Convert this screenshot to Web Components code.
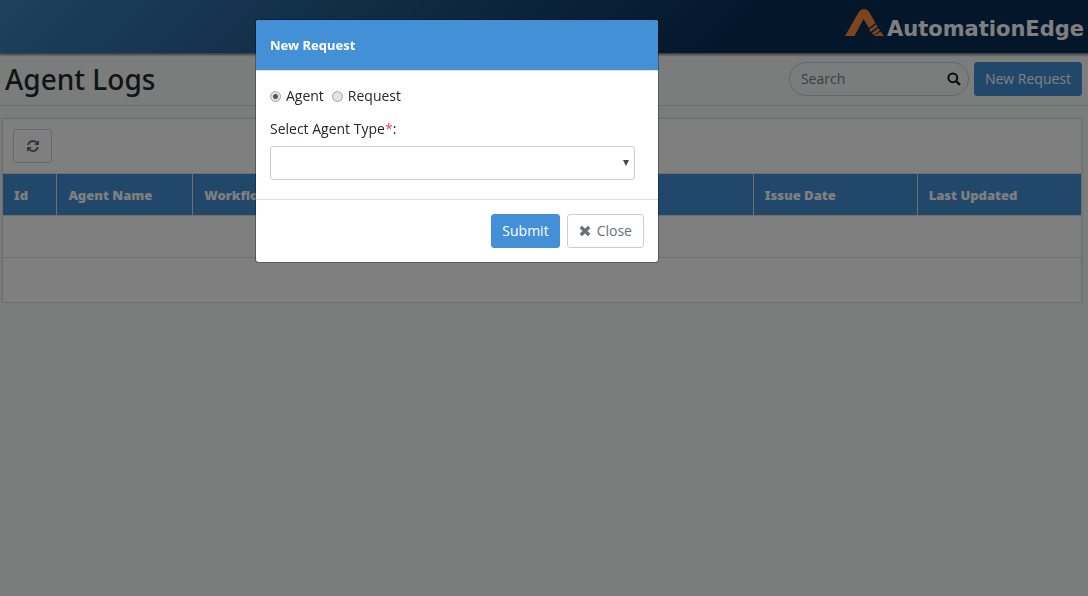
<!DOCTYPE html>
<html lang="en">
<head>
<meta charset="utf-8">
<meta name="viewport" content="width=device-width, initial-scale=1">
<title>Agent Logs</title>
<style>
    html, body {
        margin: 0;
        min-height: 100%;
    }
    body {
        --primary: #4390d6;
        --line: #dadedf;
        --control-line: #c9ced6;
        --heading-font: "Noto Sans", "Open Sans", sans-serif;
        background: #f6fbf8;
        color: #23282c;
        font: 14px/20px "Open Sans", "Noto Sans", sans-serif;
    }
</style>
</head>
<body>
<agent-logs-page></agent-logs-page>

<script>
const ICONS = {
    search: '<svg viewBox="0 0 14 14" width="14" height="14" aria-hidden="true"><circle cx="5.8" cy="5.8" r="4.4" fill="none" stroke="currentColor" stroke-width="2"/><path d="M9.2 9.2 13 13" stroke="currentColor" stroke-width="2.4"/></svg>',
    refresh: '<svg viewBox="0 0 1536 1536" width="12" height="12" aria-hidden="true"><path fill="currentColor" d="M1511 928q0 5-1 7-64 268-268 434.500T764 1536q-146 0-282.500-55T238 1324l-129 129q-19 19-45 19t-45-19-19-45V960q0-26 19-45t45-19h448q26 0 45 19t19 45-19 45l-137 137q71 66 161 102t187 36q134 0 250-65t186-179q11-17 53-117 8-23 30-23h192q13 0 22.500 9.500t9.500 22.500zm25-800v448q0 26-19 45t-45 19h-448q-26 0-45-19t-19-45 19-45l138-138Q969 256 768 256q-134 0-250 65T332 500q-11 17-53 117-8 23-30 23H50q-13 0-22.500-9.500T18 608v-7q65-268 270-434.500T768 0q146 0 284 55.500T1297 212l130-129q19-19 45-19t45 19 19 45z"/></svg>',
    close: '<svg viewBox="0 0 12 12" width="12" height="12" aria-hidden="true"><path fill="none" stroke="currentColor" stroke-width="3.4" d="m1.800 2 8.400 8m0-8-8.400 8"/></svg>'
};

class BrandLogo extends HTMLElement {
    constructor() {
        super();
        this.attachShadow({ mode: 'open' });
        this.shadowRoot.innerHTML = `
            <style>
                :host {
                    display: block;
                }
                a {
                    display: flex;
                    align-items: flex-end;
                    gap: 3px;
                    color: #fff;
                    font: bold 21px/20px "DejaVu Sans", sans-serif;
                    text-decoration: none;
                }
                svg {
                    display: block;
                    margin-bottom: 3px;
                }
            </style>
            <a href="#">
                <svg viewBox="0 0 39 27" width="39" height="27" aria-hidden="true">
                    <path fill="#fb8b3c" d="M0 27 13.500 3.500Q15.500 0 19 0t5.500 3.500L30.500 14l-6.500 5-5.500-9L9.500 27z"/>
                    <path fill="#fb8b3c" d="m31.200 15.200 1.500 2.500-7 5.200-1.400-2.500zm2.200 3.700 1.500 2.500-6.200 4.800L27 24zm2.200 3.700L39 27h-9.200l-.6-.6z"/>
                </svg>
                <slot></slot>
            </a>
        `;
    }
}

class AppBar extends HTMLElement {
    constructor() {
        super();
        this.attachShadow({ mode: 'open' });
        this.shadowRoot.innerHTML = `
            <style>
                :host {
                    display: block;
                }
                header {
                    display: flex;
                    justify-content: flex-end;
                    box-sizing: border-box;
                    height: 53px;
                    padding: 9px 4px 0 0;
                    background: linear-gradient(135deg, #3b82bd 0%, #062d55 68%);
                    box-shadow: 0 1px 2px 1px rgba(0, 0, 0, 0.5);
                }
            </style>
            <header><slot></slot></header>
        `;
    }
}

class AppButton extends HTMLElement {
    constructor() {
        super();
        this.attachShadow({ mode: 'open' });
        const icon = ICONS[this.getAttribute('icon')] || '';
        const label = this.getAttribute('label');
        this.shadowRoot.innerHTML = `
            <style>
                :host {
                    display: inline-block;
                }
                button {
                    display: flex;
                    align-items: center;
                    justify-content: center;
                    gap: 6px;
                    box-sizing: border-box;
                    height: 34px;
                    padding: 0 11px;
                    border: 1px solid var(--control-line);
                    border-radius: 3px;
                    background: #fff;
                    color: #687078;
                    font: inherit;
                    white-space: nowrap;
                    cursor: pointer;
                }
                :host([primary]) button {
                    padding: 0 10px;
                    border-color: var(--primary);
                    background: var(--primary);
                    color: #fff;
                }
                :host([square]) button {
                    width: 39px;
                    padding: 0;
                }
            </style>
            <button type="button">${icon}<slot></slot></button>
        `;
        if (label) this.shadowRoot.querySelector('button').setAttribute('aria-label', label);
    }
}

class SearchBox extends HTMLElement {
    constructor() {
        super();
        this.attachShadow({ mode: 'open' });
        this.shadowRoot.innerHTML = `
            <style>
                :host {
                    display: block;
                    width: 180px;
                }
                label {
                    display: flex;
                    align-items: center;
                    box-sizing: border-box;
                    height: 34px;
                    padding: 0 7px 0 11px;
                    border: 1px solid var(--control-line);
                    border-radius: 17px;
                    color: #151b1e;
                }
                input {
                    flex: 1;
                    min-width: 0;
                    padding: 0;
                    border: 0;
                    outline: 0;
                    background: none;
                    color: inherit;
                    font: inherit;
                }
                input::placeholder {
                    color: #73818f;
                    opacity: 1;
                }
            </style>
            <label>
                <input type="text" placeholder="Search" aria-label="Search">
                ${ICONS.search}
            </label>
        `;
    }
}

class PageHeading extends HTMLElement {
    constructor() {
        super();
        this.attachShadow({ mode: 'open' });
        this.shadowRoot.innerHTML = `
            <style>
                :host {
                    display: flex;
                    align-items: center;
                    gap: 5px;
                    box-sizing: border-box;
                    height: 53px;
                    padding: 0 6px 0 5px;
                    border-bottom: 1px solid var(--line);
                }
                h1 {
                    flex: 1;
                    margin: 0;
                    font-family: var(--heading-font);
                    font-size: 28px;
                    font-weight: 500;
                    line-height: 36px;
                }
            </style>
            <h1><slot name="title"></slot></h1>
            <slot></slot>
        `;
    }
}

class LogTable extends HTMLElement {
    constructor() {
        super();
        this.attachShadow({ mode: 'open' });
        this.shadowRoot.innerHTML = `
            <style>
                :host {
                    display: block;
                    margin: 12px 6px 0 2px;
                    border: 1px solid var(--line);
                    background: #fff;
                    box-shadow: 0 1px 4px rgba(0, 0, 0, 0.1);
                }
                .toolbar {
                    padding: 10px;
                }
                app-button {
                    display: block;
                }
                table {
                    width: 100%;
                    border-collapse: collapse;
                    table-layout: fixed;
                }
                .id { width: 5%; }
                .agent { width: 12.6%; }
                .date { width: 15.2%; }
                th {
                    height: 41px;
                    padding: 0 11px;
                    border: 1px solid var(--line);
                    border-width: 1px 0 1px 1px;
                    background: var(--primary);
                    color: #fff;
                    font-family: var(--heading-font);
                    font-size: 13px;
                    font-weight: 900;
                    text-align: left;
                }
                th:first-child {
                    border-left: 0;
                }
                td {
                    height: 41px;
                    padding: 0;
                    border-bottom: 1px solid var(--line);
                }
                tr:last-child td {
                    height: 44px;
                    border-bottom: 0;
                }
            </style>
            <div class="toolbar"><app-button square icon="refresh" label="Refresh"></app-button></div>
            <table>
                <colgroup>
                    <col class="id"><col class="agent"><col><col class="date"><col class="date">
                </colgroup>
                <thead>
                    <tr>
                        <th>Id</th><th>Agent Name</th><th>Workflow</th><th>Issue Date</th><th>Last Updated</th>
                    </tr>
                </thead>
                <tbody>
                    <tr><td colspan="5"></td></tr>
                    <tr><td colspan="5"></td></tr>
                </tbody>
            </table>
        `;
    }
}

class ModalDialog extends HTMLElement {
    constructor() {
        super();
        this.attachShadow({ mode: 'open' });
        this.shadowRoot.innerHTML = `
            <style>
                :host {
                    position: fixed;
                    inset: 0;
                    box-sizing: border-box;
                    padding: 20px 16% 20px 0;
                    background: rgba(0, 0, 0, 0.5);
                    overflow: auto;
                }
                section {
                    max-width: 402px;
                    margin: 0 auto;
                    border-radius: 3px;
                    background: #fff;
                    box-shadow: 0 0 0 1px rgba(0, 0, 0, 0.3);
                    overflow: hidden;
                }
                h2 {
                    margin: 0;
                    padding: 15px 14px;
                    border-bottom: 1px solid var(--line);
                    background: var(--primary);
                    color: #fff;
                    font-family: var(--heading-font);
                    font-size: 13px;
                    font-weight: 700;
                    line-height: 20px;
                }
                .body {
                    padding: 15px 14px 19px;
                }
                footer {
                    display: flex;
                    justify-content: flex-end;
                    gap: 7px;
                    padding: 14px;
                    border-top: 1px solid var(--line);
                }
            </style>
            <section role="dialog" aria-modal="true" aria-labelledby="heading">
                <h2 id="heading"><slot name="title"></slot></h2>
                <div class="body"><slot></slot></div>
                <footer><slot name="actions"></slot></footer>
            </section>
        `;
    }
}

class RequestForm extends HTMLElement {
    constructor() {
        super();
        this.attachShadow({ mode: 'open' });
        this.shadowRoot.innerHTML = `
            <style>
                :host {
                    display: block;
                }
                form {
                    display: grid;
                    gap: 13px;
                }
                .kinds {
                    display: flex;
                    gap: 8px;
                }
                .kinds label {
                    display: flex;
                    align-items: center;
                    gap: 5px;
                }
                input {
                    appearance: none;
                    box-sizing: border-box;
                    width: 11px;
                    height: 11px;
                    margin: 0;
                    border: 1px solid #a5a5a5;
                    border-radius: 50%;
                    background: #e3e3e3;
                }
                input:checked {
                    background: radial-gradient(circle, #555 0 2px, #e3e3e3 3px);
                }
                .field {
                    display: grid;
                    gap: 7px;
                    margin-right: 9px;
                }
                .required {
                    color: #f04050;
                }
                .select {
                    display: grid;
                    align-items: center;
                }
                .select > * {
                    grid-area: 1 / 1;
                }
                .select svg {
                    justify-self: end;
                    margin-right: 6px;
                    pointer-events: none;
                }
                select {
                    appearance: none;
                    box-sizing: border-box;
                    width: 100%;
                    height: 34px;
                    padding: 0 16px 0 10px;
                    border: 1px solid var(--control-line);
                    border-radius: 3px;
                    background: #fff;
                    color: inherit;
                    font: inherit;
                }
            </style>
            <form>
                <div class="kinds">
                    <label><input type="radio" name="kind" checked>Agent</label>
                    <label><input type="radio" name="kind">Request</label>
                </div>
                <div class="field">
                    <label for="type">Select Agent Type<span class="required">*</span>:</label>
                    <div class="select">
                        <select id="type"><option></option></select>
                        <svg viewBox="0 0 6 6" width="6" height="6" aria-hidden="true"><path fill="#3e4850" d="M0 0h6L3 6z"/></svg>
                    </div>
                </div>
            </form>
        `;
    }
}

class AgentLogsPage extends HTMLElement {
    constructor() {
        super();
        this.attachShadow({ mode: 'open' });
        this.shadowRoot.innerHTML = `
            <style>
                :host {
                    display: block;
                }
                app-bar {
                    position: relative;
                }
            </style>
            <app-bar><brand-logo>AutomationEdge</brand-logo></app-bar>
            <main>
                <page-heading>
                    <span slot="title">Agent Logs</span>
                    <search-box></search-box>
                    <app-button primary>New Request</app-button>
                </page-heading>
                <log-table></log-table>
            </main>
            <modal-dialog>
                <span slot="title">New Request</span>
                <request-form></request-form>
                <app-button slot="actions" primary>Submit</app-button>
                <app-button slot="actions" icon="close">Close</app-button>
            </modal-dialog>
        `;
    }
}

customElements.define('brand-logo', BrandLogo);
customElements.define('app-bar', AppBar);
customElements.define('app-button', AppButton);
customElements.define('search-box', SearchBox);
customElements.define('page-heading', PageHeading);
customElements.define('log-table', LogTable);
customElements.define('modal-dialog', ModalDialog);
customElements.define('request-form', RequestForm);
customElements.define('agent-logs-page', AgentLogsPage);
</script>
</body>
</html>
